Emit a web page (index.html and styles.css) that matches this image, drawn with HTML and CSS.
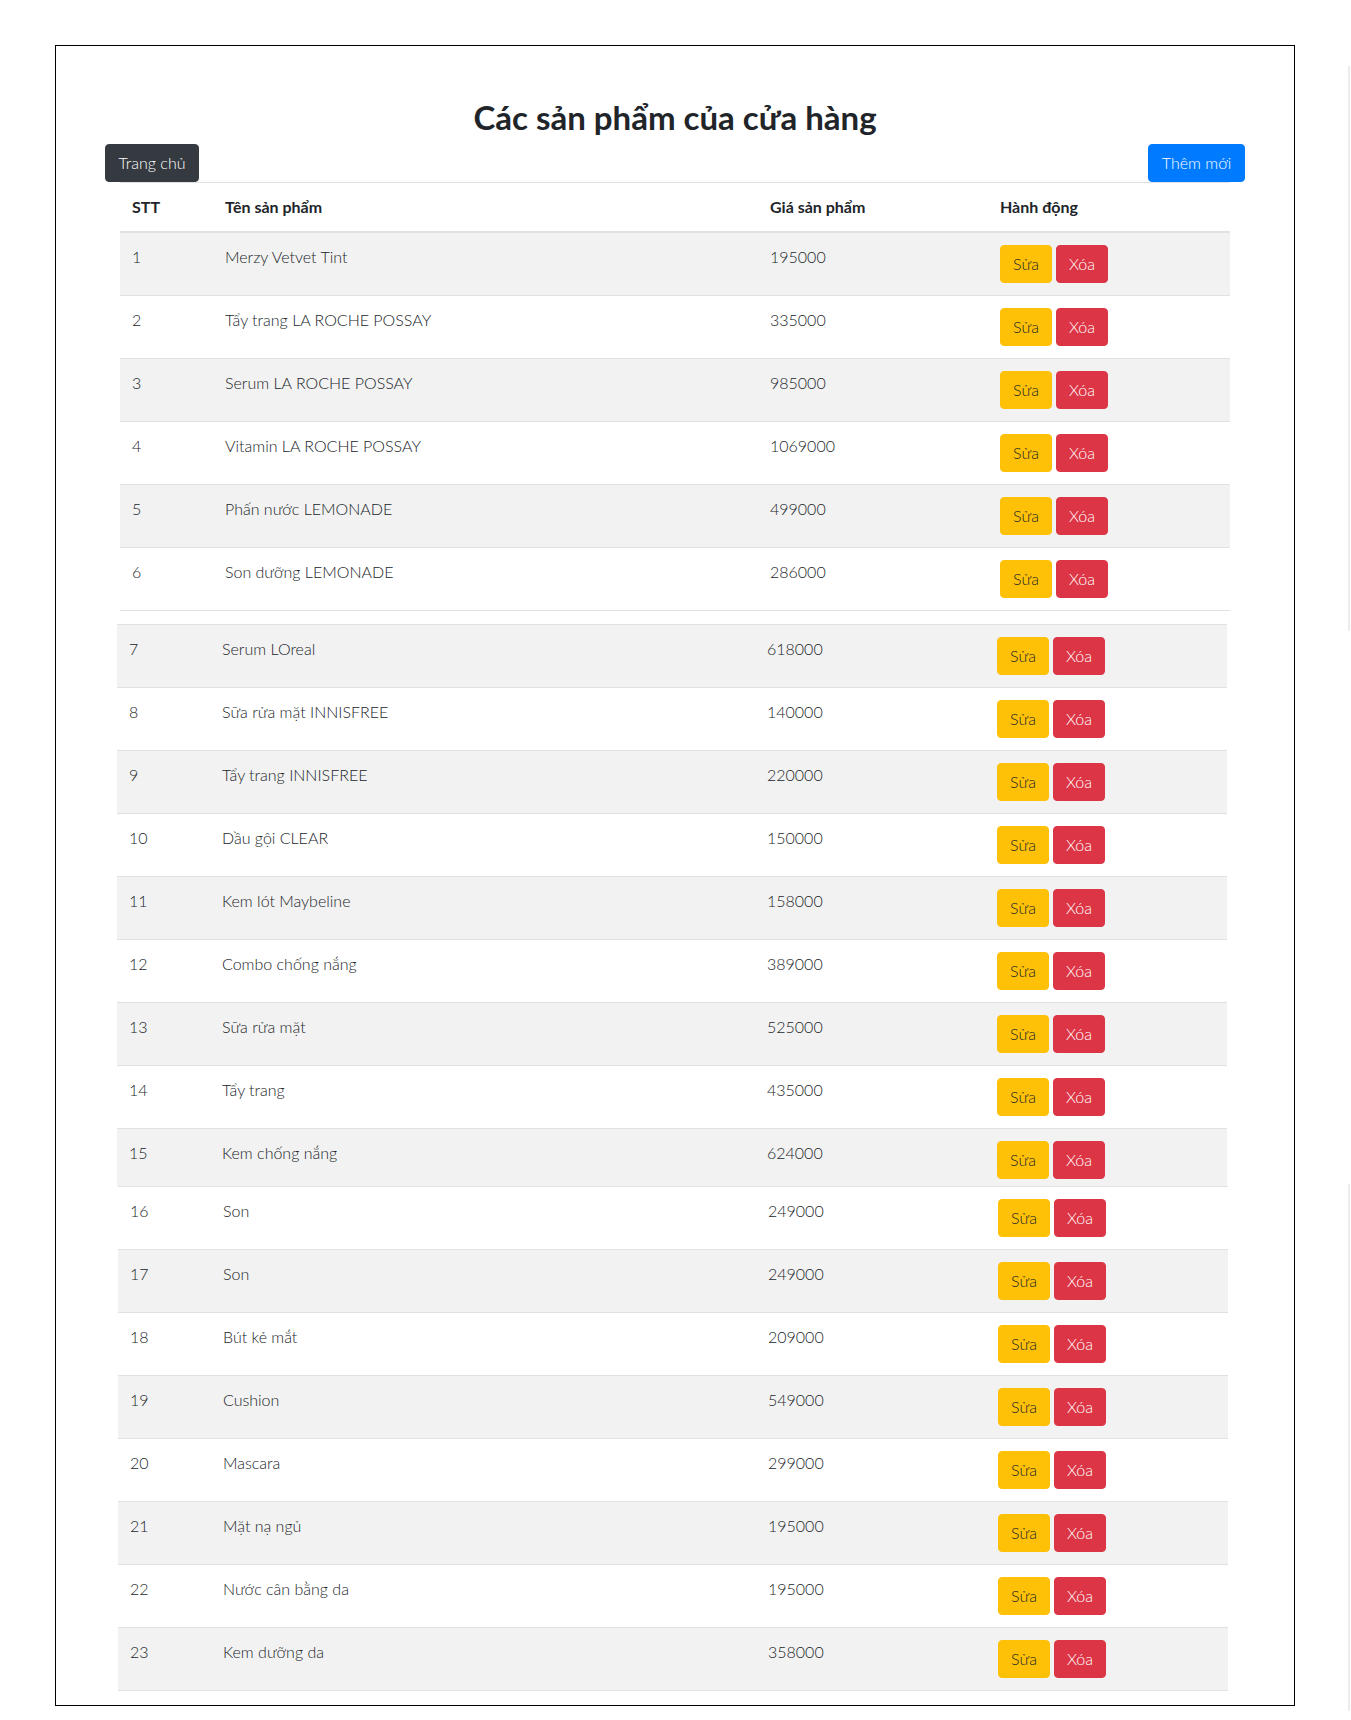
FILE: index.html
```html
<!DOCTYPE html>
<html lang="vi">
<head>
<meta charset="utf-8">
<title>Các sản phẩm của cửa hàng</title>
<link rel="stylesheet" href="styles.css">
</head>
<body>
<div class="page">
  <div class="container">
    <h2 class="title">Các sản phẩm của cửa hàng</h2>
    <div class="toolbar">
      <a class="btn btn-dark btn-home" href="#">Trang chủ</a>
      <a class="btn btn-primary btn-add" href="#">Thêm mới</a>
    </div>
  </div>

  <table class="tbl tbl--a">
    <colgroup><col class="c-stt"><col class="c-name"><col class="c-price"><col class="c-act"></colgroup>
    <thead>
      <tr><th>STT</th><th>Tên sản phẩm</th><th>Giá sản phẩm</th><th>Hành động</th></tr>
    </thead>
    <tbody>
      <tr><td>1</td><td>Merzy Vetvet Tint</td><td>195000</td><td><div class="actions"><a class="btn btn-warning" href="#">Sửa</a><a class="btn btn-danger" href="#">Xóa</a></div></td></tr>
      <tr><td>2</td><td>Tẩy trang LA ROCHE POSSAY</td><td>335000</td><td><div class="actions"><a class="btn btn-warning" href="#">Sửa</a><a class="btn btn-danger" href="#">Xóa</a></div></td></tr>
      <tr><td>3</td><td>Serum LA ROCHE POSSAY</td><td>985000</td><td><div class="actions"><a class="btn btn-warning" href="#">Sửa</a><a class="btn btn-danger" href="#">Xóa</a></div></td></tr>
      <tr><td>4</td><td>Vitamin LA ROCHE POSSAY</td><td>1069000</td><td><div class="actions"><a class="btn btn-warning" href="#">Sửa</a><a class="btn btn-danger" href="#">Xóa</a></div></td></tr>
      <tr><td>5</td><td>Phấn nước LEMONADE</td><td>499000</td><td><div class="actions"><a class="btn btn-warning" href="#">Sửa</a><a class="btn btn-danger" href="#">Xóa</a></div></td></tr>
      <tr><td>6</td><td>Son dưỡng LEMONADE</td><td>286000</td><td><div class="actions"><a class="btn btn-warning" href="#">Sửa</a><a class="btn btn-danger" href="#">Xóa</a></div></td></tr>
    </tbody>
  </table>

  <table class="tbl tbl--b">
    <colgroup><col class="c-stt"><col class="c-name"><col class="c-price"><col class="c-act"></colgroup>
    <tbody>
      <tr><td>7</td><td>Serum LOreal</td><td>618000</td><td><div class="actions"><a class="btn btn-warning" href="#">Sửa</a><a class="btn btn-danger" href="#">Xóa</a></div></td></tr>
      <tr><td>8</td><td>Sữa rửa mặt INNISFREE</td><td>140000</td><td><div class="actions"><a class="btn btn-warning" href="#">Sửa</a><a class="btn btn-danger" href="#">Xóa</a></div></td></tr>
      <tr><td>9</td><td>Tẩy trang INNISFREE</td><td>220000</td><td><div class="actions"><a class="btn btn-warning" href="#">Sửa</a><a class="btn btn-danger" href="#">Xóa</a></div></td></tr>
      <tr><td>10</td><td>Dầu gội CLEAR</td><td>150000</td><td><div class="actions"><a class="btn btn-warning" href="#">Sửa</a><a class="btn btn-danger" href="#">Xóa</a></div></td></tr>
      <tr><td>11</td><td>Kem lót Maybeline</td><td>158000</td><td><div class="actions"><a class="btn btn-warning" href="#">Sửa</a><a class="btn btn-danger" href="#">Xóa</a></div></td></tr>
      <tr><td>12</td><td>Combo chống nắng</td><td>389000</td><td><div class="actions"><a class="btn btn-warning" href="#">Sửa</a><a class="btn btn-danger" href="#">Xóa</a></div></td></tr>
      <tr><td>13</td><td>Sữa rửa mặt</td><td>525000</td><td><div class="actions"><a class="btn btn-warning" href="#">Sửa</a><a class="btn btn-danger" href="#">Xóa</a></div></td></tr>
      <tr><td>14</td><td>Tẩy trang</td><td>435000</td><td><div class="actions"><a class="btn btn-warning" href="#">Sửa</a><a class="btn btn-danger" href="#">Xóa</a></div></td></tr>
      <tr class="row-tight"><td>15</td><td>Kem chống nắng</td><td>624000</td><td><div class="actions"><a class="btn btn-warning" href="#">Sửa</a><a class="btn btn-danger" href="#">Xóa</a></div></td></tr>
    </tbody>
  </table>

  <table class="tbl tbl--c">
    <colgroup><col class="c-stt"><col class="c-name"><col class="c-price"><col class="c-act"></colgroup>
    <tbody>
      <tr><td>16</td><td>Son</td><td>249000</td><td><div class="actions"><a class="btn btn-warning" href="#">Sửa</a><a class="btn btn-danger" href="#">Xóa</a></div></td></tr>
      <tr><td>17</td><td>Son</td><td>249000</td><td><div class="actions"><a class="btn btn-warning" href="#">Sửa</a><a class="btn btn-danger" href="#">Xóa</a></div></td></tr>
      <tr><td>18</td><td>Bút kẻ mắt</td><td>209000</td><td><div class="actions"><a class="btn btn-warning" href="#">Sửa</a><a class="btn btn-danger" href="#">Xóa</a></div></td></tr>
      <tr><td>19</td><td>Cushion</td><td>549000</td><td><div class="actions"><a class="btn btn-warning" href="#">Sửa</a><a class="btn btn-danger" href="#">Xóa</a></div></td></tr>
      <tr><td>20</td><td>Mascara</td><td>299000</td><td><div class="actions"><a class="btn btn-warning" href="#">Sửa</a><a class="btn btn-danger" href="#">Xóa</a></div></td></tr>
      <tr><td>21</td><td>Mặt nạ ngủ</td><td>195000</td><td><div class="actions"><a class="btn btn-warning" href="#">Sửa</a><a class="btn btn-danger" href="#">Xóa</a></div></td></tr>
      <tr><td>22</td><td>Nước cân bằng da</td><td>195000</td><td><div class="actions"><a class="btn btn-warning" href="#">Sửa</a><a class="btn btn-danger" href="#">Xóa</a></div></td></tr>
      <tr><td>23</td><td>Kem dưỡng da</td><td>358000</td><td><div class="actions"><a class="btn btn-warning" href="#">Sửa</a><a class="btn btn-danger" href="#">Xóa</a></div></td></tr>
    </tbody>
  </table>
</div>
<div class="edge edge--upper"></div>
<div class="edge edge--lower"></div>
</body>
</html>
```

FILE: styles.css
```css
* {
  box-sizing: border-box;
}

body {
  margin: 0;
  font-family: "Segoe UI", Lato, "Noto Sans", sans-serif;
  font-size: 16px;
  line-height: 1.5;
  font-weight: 300;
  color: #212529;
  background: #fff;
}

.page {
  width: 1240px;
  margin: 45px 0 0 55px;
  border: 1px solid #000;
  padding: 52px 0 14px;
}

.container {
  width: 1140px;
  margin: 0 auto;
}

.title {
  margin: 0 0 8px;
  font-size: 33px;
  line-height: 38px;
  font-weight: 700;
  text-align: center;
}

.toolbar {
  display: flex;
  justify-content: space-between;
}

.btn {
  display: inline-block;
  height: 38px;
  padding: 6px 0;
  border: 1px solid transparent;
  border-radius: 4px;
  font-size: 16px;
  line-height: 24px;
  font-weight: 300;
  text-align: center;
  text-decoration: none;
  white-space: nowrap;
}

.btn-dark {
  background: #343a40;
  border-color: #343a40;
  color: #fff;
}

.btn-primary {
  background: #007bff;
  border-color: #007bff;
  color: #fff;
}

.btn-warning {
  background: #ffc107;
  border-color: #ffc107;
  color: #212529;
  width: 52px;
}

.btn-danger {
  background: #dc3545;
  border-color: #dc3545;
  color: #fff;
  width: 52px;
}

.btn-home {
  width: 94px;
}

.btn-add {
  width: 97px;
}

.actions {
  display: flex;
  gap: 4px;
}

.tbl {
  width: 1110px;
  table-layout: fixed;
  border-collapse: separate;
  border-spacing: 0;
}

.c-stt { width: 93px; }
.c-name { width: 545px; }
.c-price { width: 230px; }
.c-act { width: 242px; }

.tbl th,
.tbl td {
  padding: 12px;
  text-align: left;
  vertical-align: top;
  border-top: 1px solid #dee2e6;
}

.tbl thead th {
  font-weight: 700;
  border-bottom: 2px solid #dee2e6;
}

.tbl--a {
  margin-left: 64px;
  border-bottom: 1px solid #dee2e6;
}

.tbl--a tbody tr:first-child td {
  border-top: 0;
}

.tbl--b {
  margin: 13px 0 0 61px;
}

.tbl--c {
  margin-left: 62px;
  border-bottom: 1px solid #dee2e6;
}

.tbl--a tbody tr:nth-child(odd),
.tbl--b tbody tr:nth-child(odd),
.tbl--c tbody tr:nth-child(even) {
  background: #f2f2f2;
}

.row-tight td {
  padding-bottom: 7px;
}

.edge {
  position: absolute;
  right: 1px;
  width: 2px;
  background: #ececec;
}

.edge--upper {
  top: 66px;
  height: 565px;
}

.edge--lower {
  top: 1184px;
  height: 527px;
}
```
